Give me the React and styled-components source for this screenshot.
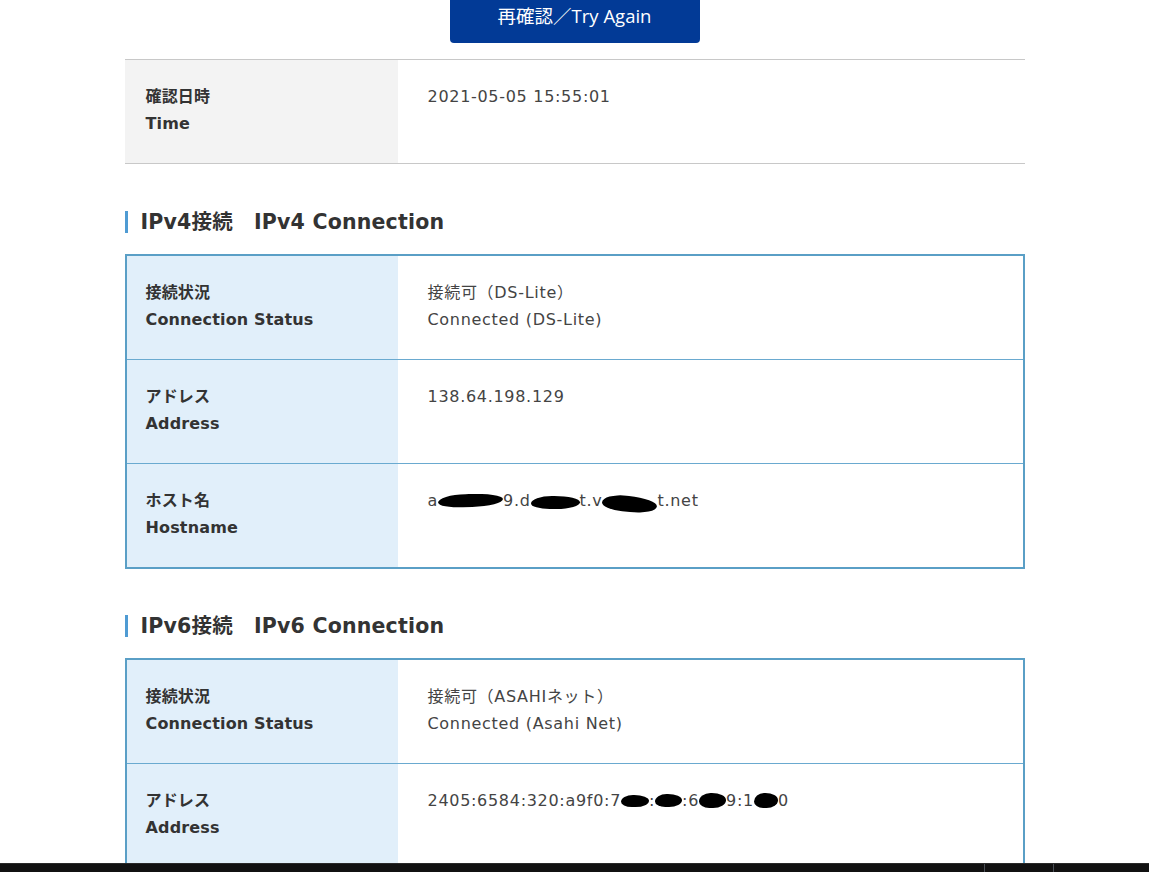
import React from "react";
import styled, { createGlobalStyle } from "styled-components";

const Global = createGlobalStyle`
  html, body { margin: 0; padding: 0; background: #fff; overflow: hidden; }
  body {
    font-family: "DejaVu Sans", "Noto Sans CJK JP", sans-serif;
    color: #333;
  }
`;

const Page = styled.div`
  width: 900px;
  margin: 0 auto;
  display: flex;
  flex-direction: column;
`;

const ButtonRow = styled.div`
  display: flex;
  justify-content: center;
  margin-top: -10px;
`;

const AgainButton = styled.button`
  width: 250px;
  height: 53px;
  padding: 0 0 2px;
  border: none;
  border-radius: 0 0 4px 4px;
  background: #023a96;
  color: #fff;
  font-family: "Open Sans", "Noto Sans CJK JP", sans-serif;
  font-size: 18.5px;
  line-height: 51px;
  cursor: pointer;
`;

const Table = styled.div`
  display: grid;
  grid-template-columns: ${(p) => (p.$framed ? "271px" : "273px")} 1fr;
  border: ${(p) => (p.$framed ? "2px solid #5a9fc6" : "none")};
  border-top: ${(p) => (p.$framed ? "2px solid #5a9fc6" : "1px solid #c8c8c8")};
  border-bottom: ${(p) => (p.$framed ? "2px solid #5a9fc6" : "1px solid #c8c8c8")};
  margin-top: ${(p) => p.$mt || 0}px;
`;

const Label = styled.div`
  background: ${(p) => (p.$framed ? "#e1effa" : "#f3f3f3")};
  padding: 23px 0 26px ${(p) => (p.$framed ? 19 : 21)}px;
  font-weight: bold;
  font-size: 16px;
  line-height: 27px;
  letter-spacing: 0.15px;
  color: #333;
  border-top: ${(p) => (p.$sep ? "1px solid #6aaad0" : "none")};
`;

const Value = styled.div`
  padding: 23px 0 26px 30px;
  font-size: 16px;
  line-height: 27px;
  letter-spacing: 0.7px;
  color: #444;
  border-top: ${(p) => (p.$sep ? "1px solid #6aaad0" : "none")};
  white-space: nowrap;
`;

const Line = styled.div``;

const Heading = styled.h2`
  margin: ${(p) => p.$mt}px 0 21px;
  padding: 0 0 0 13px;
  border-left: 3px solid #4f9bd3;
  font-size: 20.5px;
  font-weight: bold;
  line-height: 22px;
  height: 22px;
  display: flex;
  align-items: center;
  color: #333;
  gap: 21px;
  letter-spacing: 0.2px;
`;

const Redact = styled.span`
  display: inline-block;
  width: ${(p) => p.$w}px;
  height: ${(p) => p.$h || 15}px;
  background: #000;
  border-radius: 45% 55% 50% 40% / 60% 50% 55% 45%;
  vertical-align: ${(p) => p.$dy || -2}px;
  transform: rotate(${(p) => p.$rot || 0}deg);
`;

const Taskbar = styled.div`
  position: fixed;
  left: 0;
  right: 0;
  bottom: 0;
  height: 8px;
  background: #111111;
  border-top: 1px solid #2a2a2a;
`;

const TaskDivider = styled.span`
  position: absolute;
  top: 0;
  bottom: 0;
  left: ${(p) => p.$x}px;
  width: 1px;
  background: #4a4f55;
`;

function Row({ framed, sep, label, value }) {
  return (
    <>
      <Label $framed={framed} $sep={sep}>
        {label.map((l, i) => (
          <Line key={i}>{l}</Line>
        ))}
      </Label>
      <Value $sep={sep}>
        {value.map((v, i) => (
          <Line key={i}>{v}</Line>
        ))}
      </Value>
    </>
  );
}

export default function App() {
  const hostname = (
    <>
      a<Redact $w={65} $h={13} $dy={-1} $rot={-2} />
      9.d<Redact $w={49} $h={13} $dy={-3} />
      t.v<Redact $w={55} $h={16} $dy={-6} $rot={6} />
      t.net
    </>
  );
  const v6addr = (
    <>
      2405:6584:320:a9f0:7<Redact $w={28} $h={12} $dy={-1} />:
      <Redact $w={27} $h={13} $dy={-1} />:6
      <Redact $w={27} $h={15} $dy={-2} />9:1
      <Redact $w={24} $h={15} $dy={-2} />0
    </>
  );
  return (
    <>
      <Global />
      <Page>
        <ButtonRow>
          <AgainButton>再確認／Try Again</AgainButton>
        </ButtonRow>

        <Table $mt={16}>
          <Row label={["確認日時", "Time"]} value={["2021-05-05 15:55:01"]} />
        </Table>

        <Heading $mt={47}>
          <span>IPv4接続</span>
          <span>IPv4 Connection</span>
        </Heading>
        <Table $framed>
          <Row
            framed
            label={["接続状況", "Connection Status"]}
            value={["接続可（DS-Lite）", "Connected (DS-Lite)"]}
          />
          <Row framed sep label={["アドレス", "Address"]} value={["138.64.198.129"]} />
          <Row framed sep label={["ホスト名", "Hostname"]} value={[hostname]} />
        </Table>

        <Heading $mt={46}>
          <span>IPv6接続</span>
          <span>IPv6 Connection</span>
        </Heading>
        <Table $framed>
          <Row
            framed
            label={["接続状況", "Connection Status"]}
            value={["接続可（ASAHIネット）", "Connected (Asahi Net)"]}
          />
          <Row framed sep label={["アドレス", "Address"]} value={[v6addr]} />
        </Table>
      </Page>
      <Taskbar>
        <TaskDivider $x={984} />
        <TaskDivider $x={1053} />
      </Taskbar>
    </>
  );
}
